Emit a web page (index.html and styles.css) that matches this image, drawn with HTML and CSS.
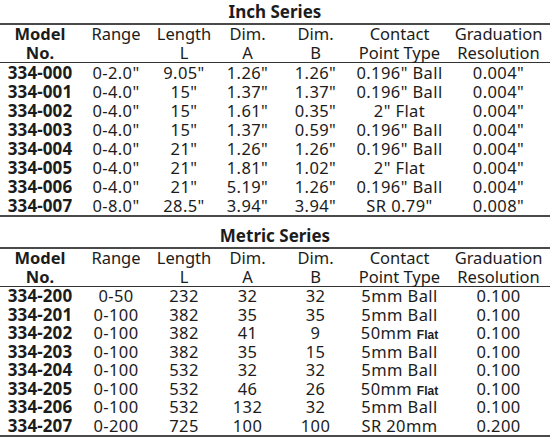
FILE: index.html
```html
<!DOCTYPE html>
<html>
<head>
<meta charset="utf-8">
<link rel="stylesheet" href="styles.css">
</head>
<body>
<div class="page">
  <section class="series inch">
    <h2 class="title">Inch Series</h2>
    <table class="spec">
      <colgroup>
        <col class="c-model"><col class="c-range"><col class="c-len"><col class="c-a"><col class="c-b"><col class="c-type"><col class="c-res">
      </colgroup>
      <thead>
        <tr><th class="model">Model<br>No.</th><th>Range</th><th>Length<br>L</th><th>Dim.<br>A</th><th>Dim.<br>B</th><th>Contact<br>Point Type</th><th>Graduation<br>Resolution</th></tr>
      </thead>
      <tbody>
        <tr><td class="model">334-000</td><td>0-2.0"</td><td>9.05"</td><td>1.26"</td><td>1.26"</td><td>0.196" Ball</td><td>0.004"</td></tr>
        <tr><td class="model">334-001</td><td>0-4.0"</td><td>15"</td><td>1.37"</td><td>1.37"</td><td>0.196" Ball</td><td>0.004"</td></tr>
        <tr><td class="model">334-002</td><td>0-4.0"</td><td>15"</td><td>1.61"</td><td>0.35"</td><td>2" Flat</td><td>0.004"</td></tr>
        <tr><td class="model">334-003</td><td>0-4.0"</td><td>15"</td><td>1.37"</td><td>0.59"</td><td>0.196" Ball</td><td>0.004"</td></tr>
        <tr><td class="model">334-004</td><td>0-4.0"</td><td>21"</td><td>1.26"</td><td>1.26"</td><td>0.196" Ball</td><td>0.004"</td></tr>
        <tr><td class="model">334-005</td><td>0-4.0"</td><td>21"</td><td>1.81"</td><td>1.02"</td><td>2" Flat</td><td>0.004"</td></tr>
        <tr><td class="model">334-006</td><td>0-4.0"</td><td>21"</td><td>5.19"</td><td>1.26"</td><td>0.196" Ball</td><td>0.004"</td></tr>
        <tr><td class="model">334-007</td><td>0-8.0"</td><td>28.5"</td><td>3.94"</td><td>3.94"</td><td>SR 0.79"</td><td>0.008"</td></tr>
      </tbody>
    </table>
  </section>
  <section class="series metric">
    <h2 class="title">Metric Series</h2>
    <table class="spec">
      <colgroup>
        <col class="c-model"><col class="c-range"><col class="c-len"><col class="c-a"><col class="c-b"><col class="c-type"><col class="c-res">
      </colgroup>
      <thead>
        <tr><th class="model">Model<br>No.</th><th>Range</th><th>Length<br>L</th><th>Dim.<br>A</th><th>Dim.<br>B</th><th>Contact<br>Point Type</th><th>Graduation<br>Resolution</th></tr>
      </thead>
      <tbody>
        <tr><td class="model">334-200</td><td>0-50</td><td>232</td><td>32</td><td>32</td><td>5mm Ball</td><td>0.100</td></tr>
        <tr><td class="model">334-201</td><td>0-100</td><td>382</td><td>35</td><td>35</td><td>5mm Ball</td><td>0.100</td></tr>
        <tr><td class="model">334-202</td><td>0-100</td><td>382</td><td>41</td><td>9</td><td>50mm <span class="flat">Flat</span></td><td>0.100</td></tr>
        <tr><td class="model">334-203</td><td>0-100</td><td>382</td><td>35</td><td>15</td><td>5mm Ball</td><td>0.100</td></tr>
        <tr><td class="model">334-204</td><td>0-100</td><td>532</td><td>32</td><td>32</td><td>5mm Ball</td><td>0.100</td></tr>
        <tr><td class="model">334-205</td><td>0-100</td><td>532</td><td>46</td><td>26</td><td>50mm <span class="flat">Flat</span></td><td>0.100</td></tr>
        <tr><td class="model">334-206</td><td>0-100</td><td>532</td><td>132</td><td>32</td><td>5mm Ball</td><td>0.100</td></tr>
        <tr><td class="model">334-207</td><td>0-200</td><td>725</td><td>100</td><td>100</td><td>SR 20mm</td><td>0.200</td></tr>
      </tbody>
    </table>
  </section>
</div>
</body>
</html>
```

FILE: styles.css
```css
html, body {
  margin: 0;
  padding: 0;
  background: #ffffff;
}
.page {
  width: 550px;
  height: 440px;
  overflow: hidden;
  font-family: "Noto Sans", "Liberation Sans", sans-serif;
  font-size: 16.5px;
  color: #1c1c1c;
}
.title {
  margin: 0;
  font-size: 17px;
  font-weight: bold;
  line-height: 19px;
  text-align: center;
}
.inch .title {
  padding: 2px 0 2px;
}
.metric .title {
  padding: 9px 0 2px;
}
.spec {
  width: 550px;
  border-collapse: collapse;
  table-layout: fixed;
  border-top: 2px solid #4a4a4a;
  border-bottom: 2px solid #4a4a4a;
}
.c-model { width: 80px; }
.c-range { width: 72px; }
.c-len { width: 64px; }
.c-a { width: 63px; }
.c-b { width: 73px; }
.c-type { width: 95px; }
.c-res { width: 103px; }
.spec thead {
  border-bottom: 1px solid #333;
}
.spec th {
  font-weight: normal;
  padding: 0;
  line-height: 18.5px;
  text-align: center;
  vertical-align: top;
  white-space: nowrap;
}
.spec th.model {
  font-weight: bold;
}
.spec td {
  padding: 0;
  line-height: 19px;
  height: 19px;
  text-align: center;
  white-space: nowrap;
  letter-spacing: 0.4px;
}
.metric .spec tbody tr:nth-child(odd) td {
  line-height: 18px;
  height: 18px;
}
.metric .spec tbody tr:nth-child(even) td {
  line-height: 19px;
  height: 19px;
}
.spec td.model {
  font-weight: bold;
  font-size: 17px;
  letter-spacing: 0.1px;
}
.flat {
  font-family: "Liberation Sans", Arial, sans-serif;
  font-weight: bold;
  font-size: 12px;
  line-height: 10px;
  letter-spacing: 0;
}
```
